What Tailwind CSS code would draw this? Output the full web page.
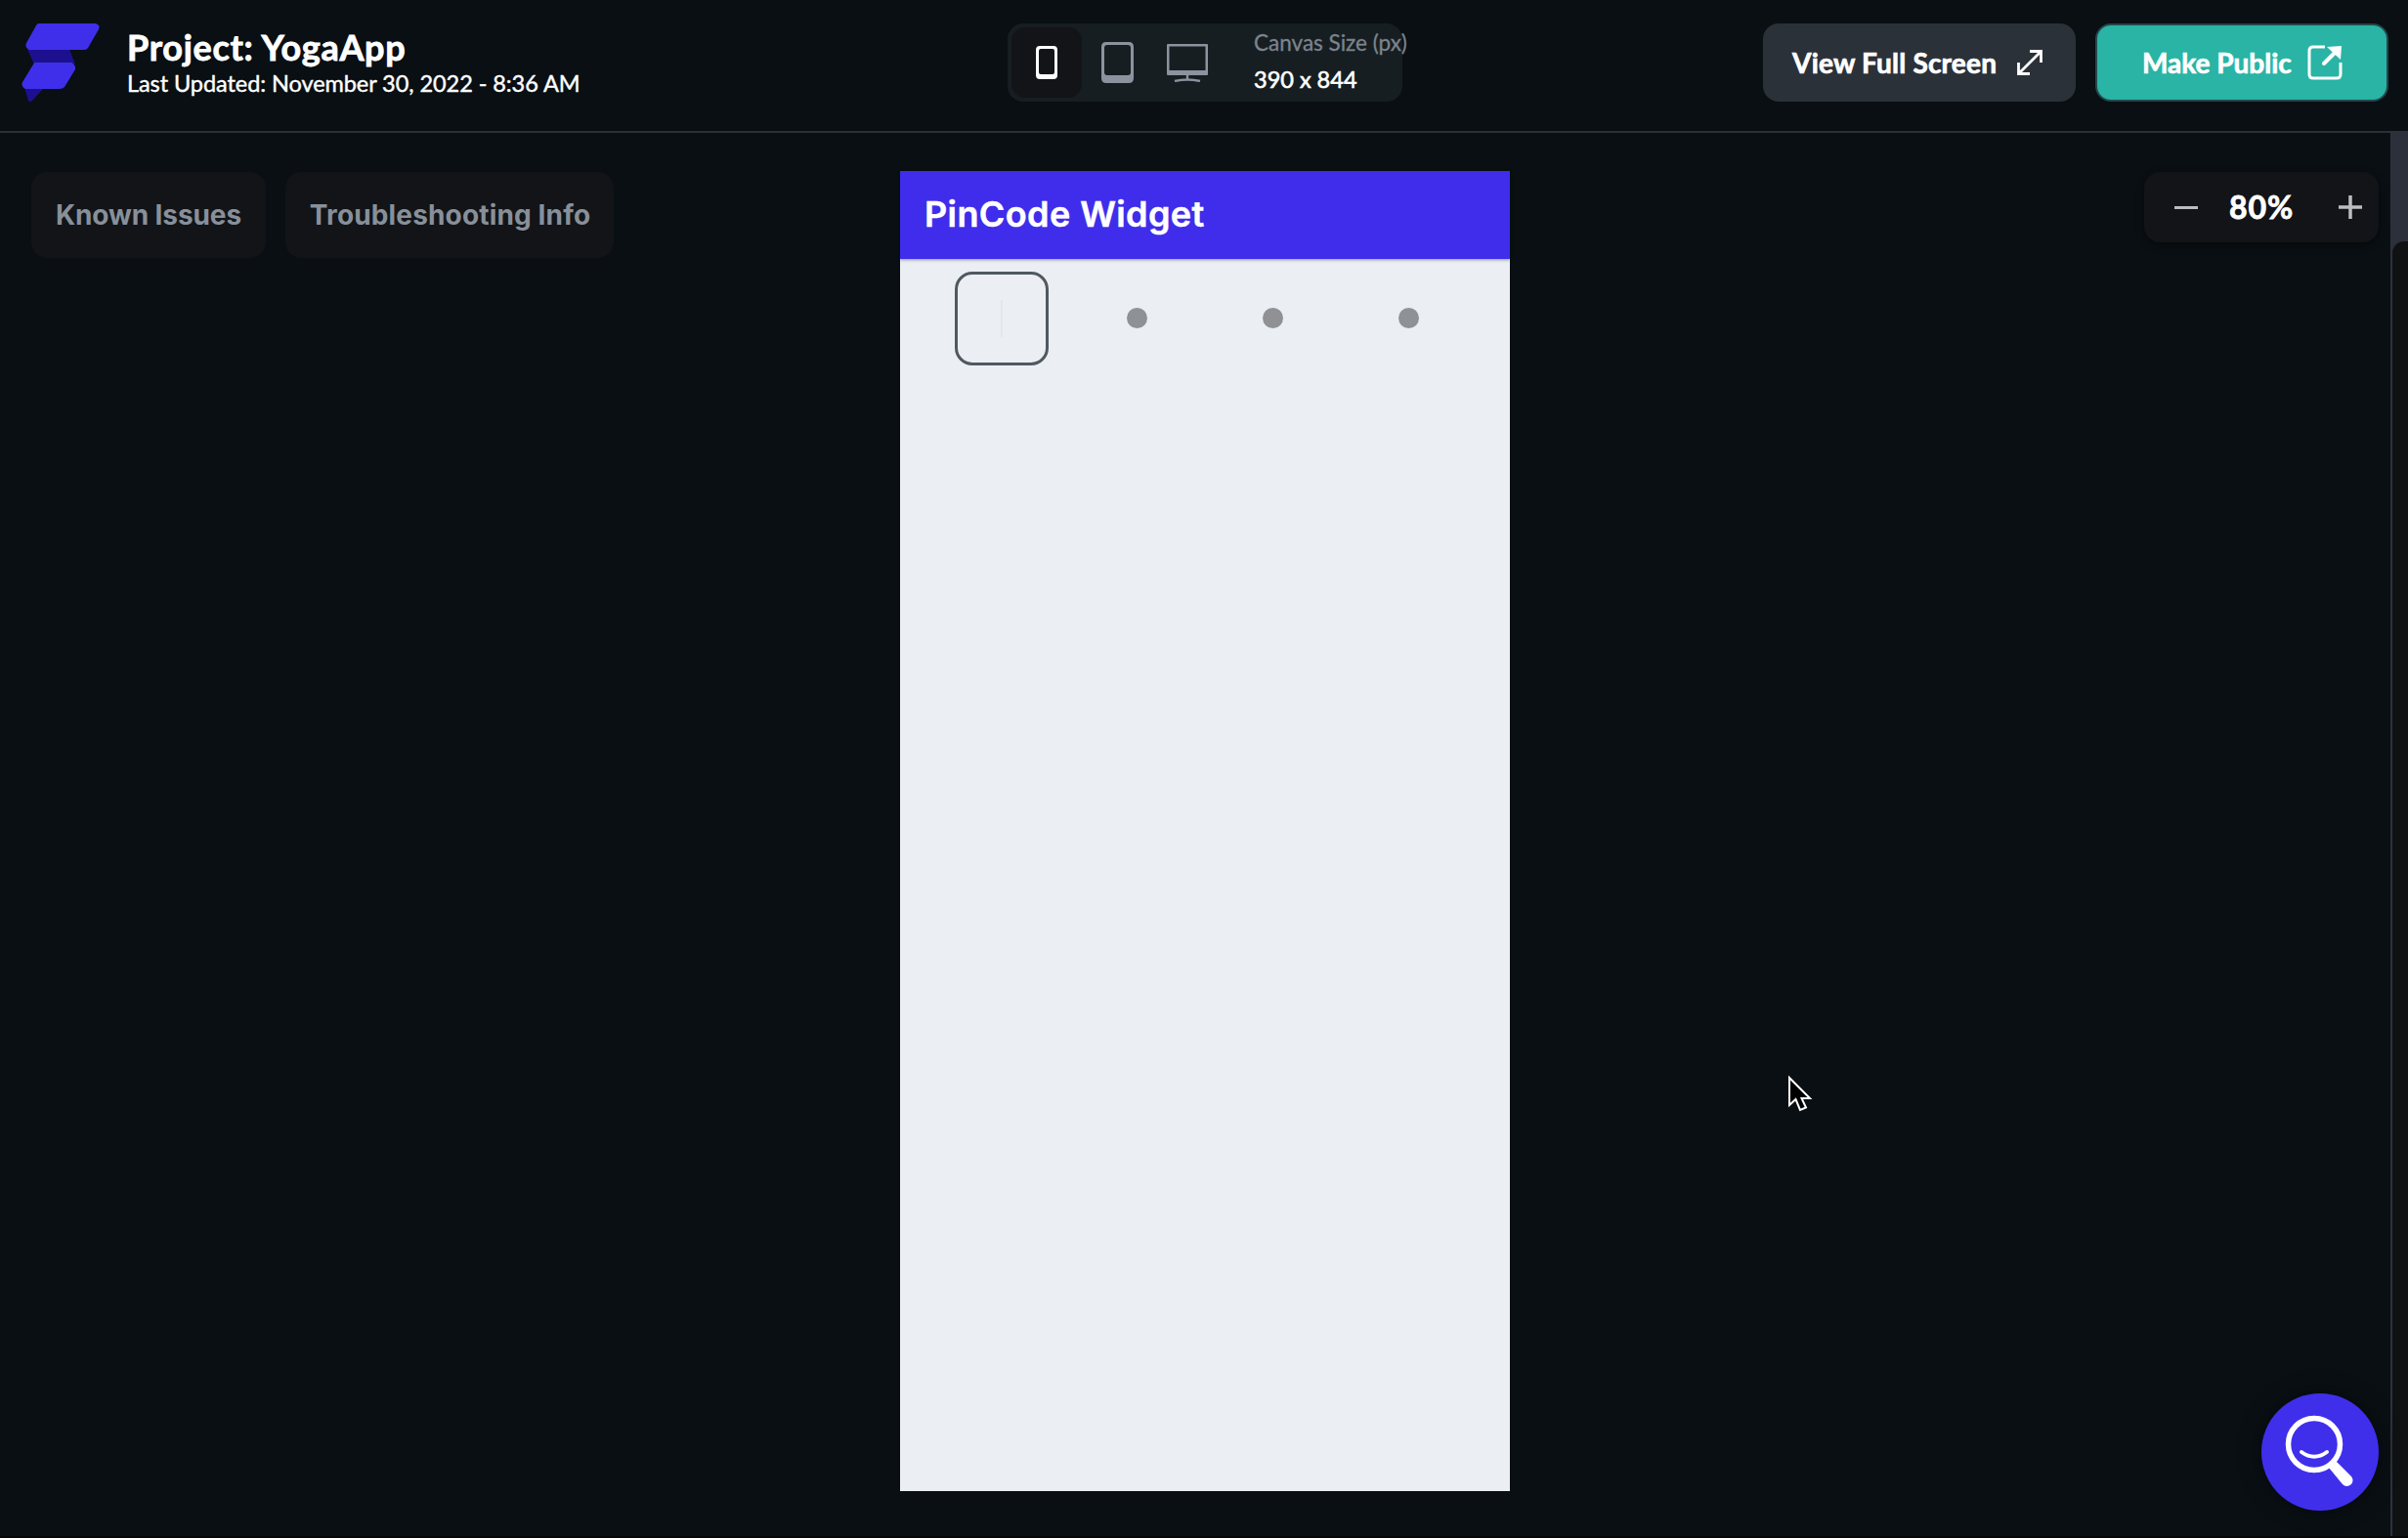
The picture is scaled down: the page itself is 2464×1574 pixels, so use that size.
<!DOCTYPE html>
<html lang="en">
<head>
<meta charset="utf-8">
<title>YogaApp</title>
<script src="https://cdn.jsdelivr.net/npm/@tailwindcss/browser@4"></script>
</head>
<body class="flex h-[1574px] w-[2464px] flex-col overflow-hidden border-b-2 border-[#05080b] bg-[#090f13] font-['Lato',sans-serif] text-white">
  <header class="flex h-[136px] shrink-0 items-start border-b-2 border-[#2b3036] pt-6 pl-[22px]">
    <svg class="h-20 w-20 shrink-0" viewBox="0 0 80 80">
      <path d="M6 26h43l6 16H13zM2 62H27L22 67 11 79q-2 2-4 0z" fill="#1d108f"/>
      <path d="M18 0H75Q81 1 79 6L68 25Q67 27 64 27H8Q3 25 5 20L15 2Q16 0 18 0z" fill="#3f2feb"/>
      <path d="M14 40H51Q56 43 55 47L44 65Q42 67 39 67H4Q-1 64 1 60L12 42Q13 40 14 40z" fill="#3f2feb"/>
    </svg>
    <div class="ml-7 w-[901px] pt-[3px] whitespace-nowrap">
      <div class="text-[36px] leading-[42px] font-bold tracking-[0.7px] [-webkit-text-stroke:0.8px_white]">Project: YogaApp</div>
      <div class="text-[23.5px] leading-8 tracking-[-0.07px] [-webkit-text-stroke:0.4px_white]">Last Updated: November 30, 2022 - 8:36 AM</div>
    </div>
    <div class="flex h-20 w-[404px] shrink-0 rounded-2xl bg-[#171e22] p-1">
      <div class="flex size-[72px] shrink-0 items-center justify-center rounded-[14px] bg-[#121418]">
        <svg class="h-[34px] w-[22px]" viewBox="0 0 22 34"><path fill="#fff" fill-rule="evenodd" d="M4 0h14q4 0 4 4v26q0 4-4 4H4q-4 0-4-4V4Q0 0 4 0zM5 3Q3 3 3 5v22q0 2 2 2h12q2 0 2-2V5q0-2-2-2z"/></svg>
      </div>
      <div class="flex size-[72px] shrink-0 items-center justify-center">
        <svg class="h-[42px] w-[33px]" viewBox="0 0 33 42"><path fill="#8b949e" fill-rule="evenodd" d="M5 0h23q5 0 5 5v32q0 5-5 5H5q-5 0-5-5V5Q0 0 5 0zM6 3Q3 3 3 6v25q0 3 3 3h21q3 0 3-3V6q0-3-3-3z"/></svg>
      </div>
      <div class="flex size-[72px] shrink-0 items-center justify-center">
        <svg class="h-[39px] w-[42px]" viewBox="0 0 42 39"><path fill="#8b949e" fill-rule="evenodd" d="M1 0h40q1 0 1 1v30q0 1-1 1H1q-1 0-1-1V1Q0 0 1 0zM2.500 2.500v24.500h37V2.500z"/><path d="M21 31v5M8 38q13-3 26 0" fill="none" stroke="#8b949e" stroke-width="2.400"/></svg>
      </div>
      <div class="ml-8 whitespace-nowrap">
        <div class="text-[22.5px] leading-8 text-[#7b848e] [-webkit-text-stroke:0.3px_#7b848e]">Canvas Size (px)</div>
        <div class="pt-[5px] text-[23.5px] leading-8 [-webkit-text-stroke:0.6px_white]">390 x 844</div>
      </div>
    </div>
    <div class="ml-[369px] flex h-20 w-80 shrink-0 items-center rounded-2xl bg-[#2b3139] pl-[30px]">
      <div class="w-[230px] text-[28px] font-bold tracking-[0.2px] whitespace-nowrap [-webkit-text-stroke:0.7px_white]">View Full Screen</div>
      <svg class="size-[26px]" viewBox="0 0 26 26" fill="none" stroke="#fff" stroke-width="2.800"><path d="M13 1.500h11.500V13M1.500 13v11.500H13M2 24L24 2"/></svg>
    </div>
    <div class="ml-5 flex h-20 w-[300px] shrink-0 items-center rounded-2xl border-2 border-[#24474c] bg-[#29b4a5] pl-[46px]">
      <div class="w-[169px] text-[28px] font-bold whitespace-nowrap [-webkit-text-stroke:0.7px_white]">Make Public</div>
      <svg class="size-9" viewBox="0 0 36 36"><path d="M18 2H6Q2 2 2 6v24q0 4 4 4h24q4 0 4-4V18" fill="none" stroke="#fff" stroke-width="3"/><path d="M17 19L29 7" stroke="#fff" stroke-width="4" stroke-linecap="round"/><path d="M20 2L35 1 34 15z" fill="#fff"/></svg>
    </div>
  </header>
  <main class="relative flex grow items-start">
    <div class="mt-10 ml-8 flex w-[889px] gap-5 font-['Inter',sans-serif] text-[28px] font-bold whitespace-nowrap text-[#87909a]">
      <div class="flex h-[88px] w-[240px] items-center justify-center rounded-2xl bg-[#121418] tracking-[-0.1px]">Known Issues</div>
      <div class="flex h-[88px] w-[336px] items-center justify-center rounded-2xl bg-[#121418] pl-px tracking-[0.15px]">Troubleshooting Info</div>
    </div>
    <div class="mt-[39px] flex h-[1351px] w-[624px] shrink-0 flex-col bg-[#ebeff4]">
      <div class="flex h-[90px] items-center bg-[#3f2deb] pb-0.5 pl-[25px] font-['Inter',sans-serif] text-[36px] font-semibold tracking-[0.4px] whitespace-nowrap shadow-[0_1px_3px_rgba(0,0,0,0.4)] [-webkit-text-stroke:0.5px_white]">PinCode Widget</div>
      <div class="mt-[13px] flex pl-[56px]">
        <div class="flex size-24 items-center justify-center rounded-[18px] border-3 border-[#505860]"><div class="h-[38px] w-0.5 bg-[#e4e7ee]"></div></div>
        <div class="ml-[42px] flex size-24 items-center justify-center pb-px"><div class="size-[21px] rounded-full bg-[#8f9195]"></div></div>
        <div class="ml-[43px] flex size-24 items-center justify-center pb-px"><div class="size-[21px] rounded-full bg-[#8f9195]"></div></div>
        <div class="ml-[43px] flex size-24 items-center justify-center pb-px"><div class="size-[21px] rounded-full bg-[#8f9195]"></div></div>
      </div>
    </div>
    <div class="mt-10 ml-[649px] flex h-[72px] w-60 shrink-0 items-center rounded-2xl bg-[#121418] pl-[31px] shadow-[0_3px_8px_rgba(0,0,0,0.4)]">
      <div class="h-[3px] w-6 bg-[#bdbdc0]"></div>
      <div class="ml-8 w-[112px] text-[32px] font-bold tracking-[0.9px] [-webkit-text-stroke:0.8px_white]">80%</div>
      <svg class="size-6" viewBox="0 0 24 24" stroke="#bdbdc0" stroke-width="3.500"><path d="M12 0v24M0 12h24"/></svg>
    </div>
    <div class="-mt-0.5 ml-3 flex h-[1438px] w-[18px] shrink-0 flex-col border-l-2 border-[#2b323a] bg-[#2b303b]">
      <div class="mt-[113px] grow rounded-tl-xl bg-[#101113]"></div>
    </div>
    <!-- Pointer -->
    <svg class="absolute top-[964px] left-[1828px] h-10 w-7" viewBox="0 0 28 40"><path d="M3 3V31l6.500-6L14 36l6-2.500-4.500-9.500H24z" fill="#000" stroke="#fff" stroke-width="2"/></svg>
    <!-- Help button -->
    <div class="absolute top-[1290px] left-[2314px] size-[120px] rounded-full bg-[#3f2feb] shadow-[0_0_24px_rgba(0,0,0,0.4)]">
      <svg class="size-full" viewBox="0 0 120 120" fill="none" stroke="#fff" stroke-linecap="round"><circle cx="54" cy="52" r="26.500" stroke-width="5.500"/><path d="M41 60q13 9.500 26 0" stroke-width="4"/><path d="M69 76L76 69 92 85Q95 89 92 93 87 97 83 93z" fill="#fff" stroke="none"/></svg>
    </div>
  </main>
</body>
</html>
